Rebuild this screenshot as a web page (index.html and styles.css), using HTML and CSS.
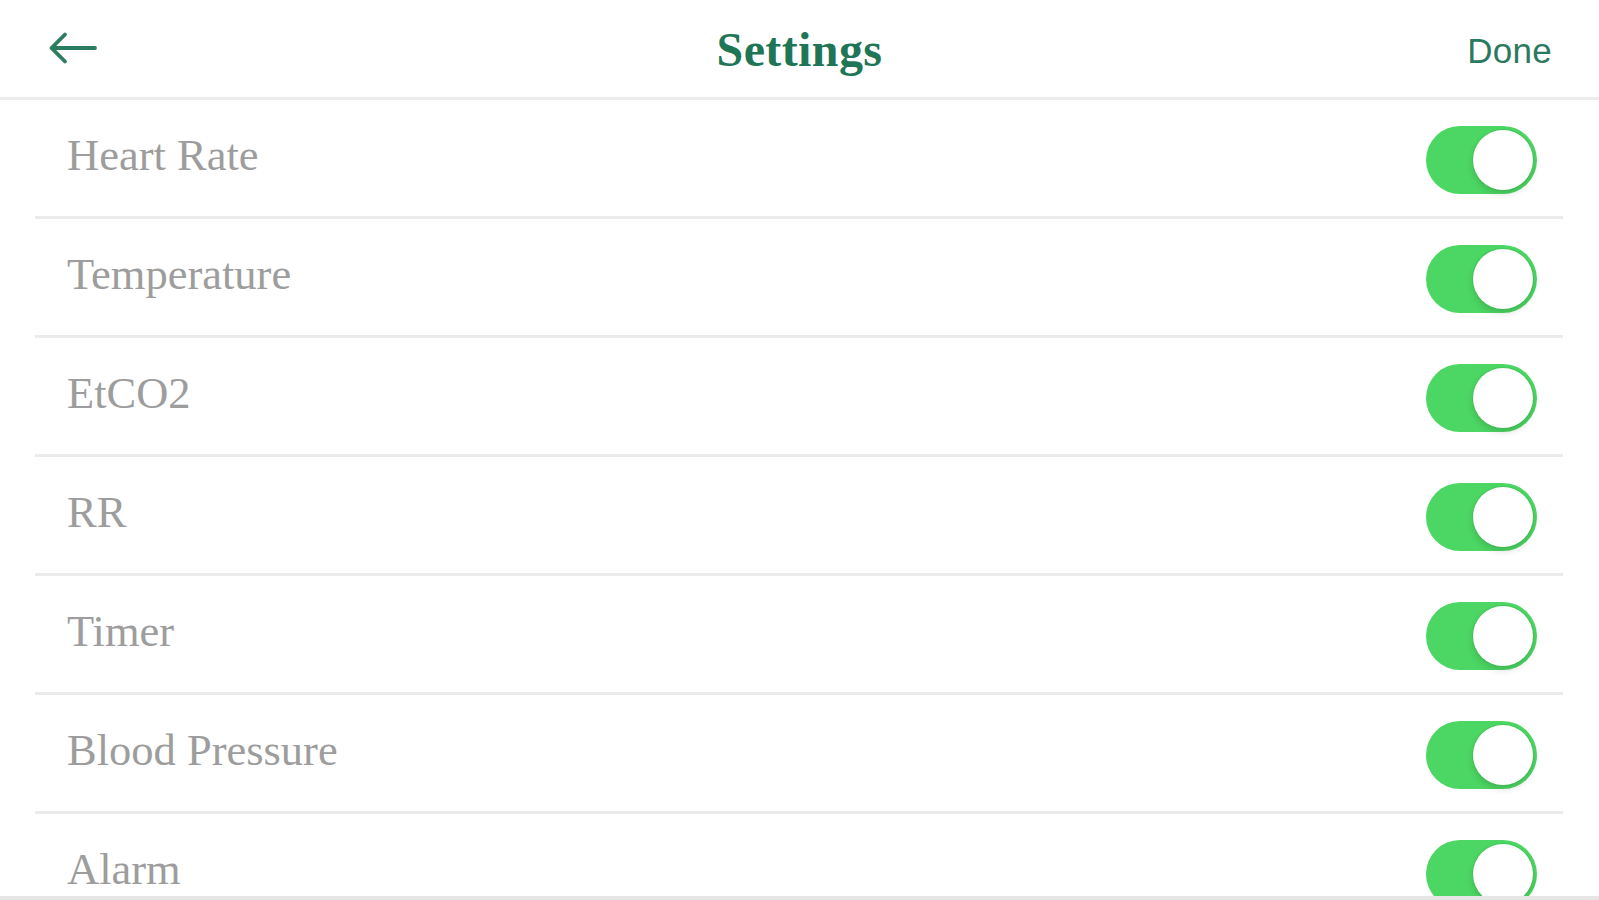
FILE: index.html
```html
<!DOCTYPE html>
<html lang="en">
<head>
<meta charset="utf-8">
<title>Settings</title>
<link rel="stylesheet" href="styles.css">
</head>
<body>
<div class="screen">
  <header class="topbar">
    <div class="topbar-left">
      <svg class="back" width="50" height="34" viewBox="0 0 50 34" aria-label="Back">
        <path d="M48 17 H5 M18 3.5 L4.5 17 L18 30.5" fill="none" stroke="#2b7d60" stroke-width="3.8" stroke-linecap="round" stroke-linejoin="round"/>
      </svg>
    </div>
    <h1 class="title">Settings</h1>
    <div class="topbar-right"><span class="done">Done</span></div>
  </header>
  <main class="list">
    <div class="row"><span class="label">Heart Rate</span><span class="toggle on"><span class="knob"></span></span></div>
    <div class="row"><span class="label">Temperature</span><span class="toggle on"><span class="knob"></span></span></div>
    <div class="row"><span class="label">EtCO2</span><span class="toggle on"><span class="knob"></span></span></div>
    <div class="row"><span class="label">RR</span><span class="toggle on"><span class="knob"></span></span></div>
    <div class="row"><span class="label">Timer</span><span class="toggle on"><span class="knob"></span></span></div>
    <div class="row"><span class="label">Blood Pressure</span><span class="toggle on"><span class="knob"></span></span></div>
    <div class="row"><span class="label">Alarm</span><span class="toggle on"><span class="knob"></span></span></div>
  </main>
  <div class="bottom-edge"></div>
</div>
</body>
</html>
```
FILE: styles.css
```css
html, body {
  margin: 0;
  padding: 0;
  background: #ffffff;
}

.screen {
  height: 900px;
  display: flex;
  flex-direction: column;
  overflow: hidden;
}

.topbar {
  flex: 0 0 97px;
  display: grid;
  grid-template-columns: 1fr auto 1fr;
  align-items: center;
  padding: 0 47px;
  border-bottom: 3px solid #ededed;
}

.topbar-left {
  display: flex;
  align-items: center;
}

.back {
  display: block;
  margin-top: -1px;
}

.title {
  margin: 2px 0 0 0;
  font-family: "Liberation Serif", "Times New Roman", serif;
  font-weight: 700;
  font-size: 48px;
  color: #1f7656;
  letter-spacing: 0.4px;
}

.topbar-right {
  display: flex;
  justify-content: flex-end;
}

.done {
  margin-top: 4px;
  font-family: "Liberation Sans", Arial, sans-serif;
  font-size: 35px;
  color: #2b7a60;
  letter-spacing: 0.3px;
}

.list {
  flex: 1 1 auto;
  overflow: hidden;
  padding: 0 36px 0 35px;
}

.row {
  height: 116px;
  display: flex;
  align-items: center;
  justify-content: space-between;
  padding: 0 26px 0 32px;
  border-bottom: 3px solid #ebebeb;
}

.label {
  padding-bottom: 7px;
  font-family: "Liberation Serif", "Times New Roman", serif;
  font-size: 44.5px;
  color: #9d9d9d;
}

.toggle {
  position: relative;
  width: 111px;
  height: 68px;
  margin-top: 3px;
  border-radius: 34px;
  background: #4cd663;
}

.knob {
  position: absolute;
  top: 4px;
  right: 4px;
  width: 60px;
  height: 60px;
  border-radius: 50%;
  background: #ffffff;
  box-shadow: 0 0 0 1px rgba(60, 180, 80, 0.35), 0 4px 7px rgba(0, 0, 0, 0.14);
}

.bottom-edge {
  flex: 0 0 4px;
  background: #e6e6e6;
}
```
